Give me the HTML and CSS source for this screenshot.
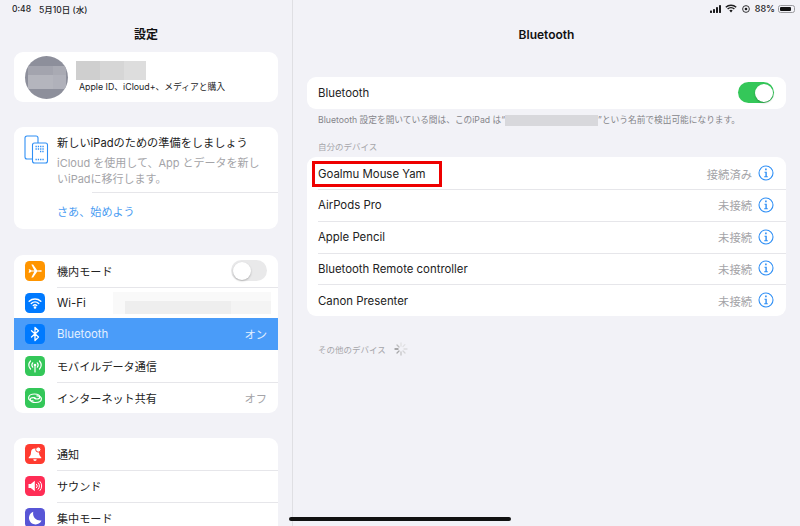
FILE: index.html
```html
<!DOCTYPE html>
<html lang="ja">
<head>
<meta charset="utf-8">
<title>Bluetooth</title>
<link rel="stylesheet" href="styles.css">
</head>
<body>
<div class="app">
  <aside class="sidebar">
    <div class="status status-left"><span>0:48</span><span>5月10日 (水)</span></div>
    <h1 class="title">設定</h1>
    <section class="card profile">
      <div class="avatar"><i></i><i></i><i></i><i></i></div>
      <div class="profile-text">
        <div class="name-blur"><i></i><i></i><i></i></div>
        <div class="profile-sub">Apple ID、iCloud+、メディアと購入</div>
      </div>
    </section>
    <section class="card promo">
      <div class="promo-body">
        <svg class="promo-icon" viewBox="0 0 25 29" fill="none" stroke="#2f8ff5" stroke-width="1.1">
          <path d="M8 24H3a2 2 0 0 1-2-2V3a2 2 0 0 1 2-2h9a2 2 0 0 1 2 2v5"/>
          <rect x="8.5" y="8" width="15" height="20" rx="2"/>
          <path d="M11.5 11.5h9M11.5 14h9M16 16.5h4.500M11.500 24.500h9" stroke-width="1.300" stroke-dasharray="1.300 1"/>
        </svg>
        <div class="promo-text">
          <div class="promo-title">新しいiPadのための準備をしましょう</div>
          <div class="promo-desc">iCloud を使用して、App とデータを新しいiPadに移行します。</div>
        </div>
      </div>
      <div class="promo-rule"></div>
      <a class="promo-link">さあ、始めよう</a>
    </section>
    <ul class="card list list-net">
      <li class="row">
        <span class="ico orange"><svg viewBox="0 0 20 20"><path fill="#fff" d="M3.500 8.600l1.300-.3 1.700 1.300 2.900-.1L6.300 3.500h1.800l4.200 5.900 2.900-.1c1 0 1.800.3 1.800.7s-.8.700-1.800.7l-2.900-.1-4.200 5.900H6.300l3.100-6-2.900-.1-1.700 1.300-1.300-.3.800-1.900z"/></svg></span>
        <span class="label label-ja">機内モード</span><span class="switch"></span>
      </li>
      <li class="row">
        <span class="ico blue"><svg viewBox="0 0 20 20" fill="none" stroke="#fff" stroke-width="1.500" stroke-linecap="round"><path d="M4.200 8.200a8.500 8.500 0 0 1 11.600 0M6.300 10.500a5.500 5.500 0 0 1 7.400 0M8.300 12.500a2.600 2.600 0 0 1 3.400 0"/><circle cx="10" cy="14.500" r=".6" fill="#fff"/></svg></span>
        <span class="label">Wi-Fi</span><span class="wifi-blur"><i></i><i></i></span>
      </li>
      <li class="row selected">
        <span class="ico blue"><svg viewBox="0 0 20 20" fill="none" stroke="#fff" stroke-width="1.300" stroke-linejoin="round" stroke-linecap="round"><path d="M6.500 6.700l7 6.400-3.500 3.400V3.500l3.500 3.200-7 6.400"/></svg></span>
        <span class="label">Bluetooth</span><span class="value">オン</span>
      </li>
      <li class="row">
        <span class="ico green"><svg viewBox="0 0 20 20" fill="none" stroke="#fff" stroke-width="1.200" stroke-linecap="round"><path d="M10 10.500V16"/><circle cx="10" cy="9" r="1.300" fill="#fff" stroke="none"/><path d="M7.700 6.800a3.500 3.500 0 0 0 0 4.400M12.300 6.800a3.500 3.500 0 0 1 0 4.400M5.500 5a6.200 6.200 0 0 0 0 8M14.500 5a6.200 6.200 0 0 1 0 8"/></svg></span>
        <span class="label label-ja">モバイルデータ通信</span>
      </li>
      <li class="row">
        <span class="ico green"><svg viewBox="0 0 20 20" fill="none" stroke="#fff" stroke-width="1.200"><path d="M8.500 12.800c-2.800.4-4.900-.8-4.900-2.800 0-2.400 2.700-4 5.900-4 3 0 5.300 1.300 5.300 3 0 1.200-1.300 2-2.900 2-1.400 0-2.500-.6-2.500-1.400"/><path d="M11.500 7.900c2.800-.4 4.900.8 4.900 2.800 0 2.400-2.700 3.800-5.900 3.800-3 0-5.300-1.200-5.300-2.900 0-1.200 1.300-2 2.900-2 1.400 0 2.500.6 2.500 1.400"/></svg></span>
        <span class="label label-ja">インターネット共有</span><span class="value">オフ</span>
      </li>
    </ul>
    <ul class="card list list-notify">
      <li class="row">
        <span class="ico red"><svg viewBox="0 0 20 20" fill="#fff"><path d="M10 4.500a4 4 0 0 0-4 4c0 3-1.600 4.200-2.300 5v.8h12.600v-.8c-.7-.8-2.300-2-2.300-5a4 4 0 0 0-4-4z"/><path d="M8.300 15.200h3.400a1.700 1.700 0 0 1-3.400 0z"/><circle cx="13.300" cy="5.500" r="2.600" stroke="#ff3b30" stroke-width="1"/></svg></span>
        <span class="label label-ja">通知</span>
      </li>
      <li class="row">
        <span class="ico pink"><svg viewBox="0 0 20 20" fill="none" stroke="#fff" stroke-width="1" stroke-linecap="round"><path fill="#fff" stroke="none" d="M3.500 8h2.300l4-3.200v10.400l-4-3.200H3.500z"/><path d="M11.500 8.200a2.500 2.500 0 0 1 0 3.600M13.200 6.800a4.500 4.500 0 0 1 0 6.400M15 5.500a6.500 6.500 0 0 1 0 9"/></svg></span>
        <span class="label label-ja">サウンド</span>
      </li>
      <li class="row">
        <span class="ico indigo"><svg viewBox="0 0 20 20"><path fill="#fff" d="M8.300 3.800a6.500 6.500 0 1 0 8.200 8.600c-4.800 1.200-9.500-3.300-8.200-8.600z"/></svg></span>
        <span class="label label-ja">集中モード</span>
      </li>
    </ul>
  </aside>

  <main class="detail">
    <div class="status status-right">
      <svg class="st-signal" viewBox="0 0 12 8" fill="#1c1c1e"><rect x="0" y="5.500" width="2" height="2.500" rx=".4"/><rect x="3" y="4" width="2" height="4" rx=".4"/><rect x="6" y="2" width="2" height="6" rx=".4"/><rect x="9" y="0" width="2" height="8" rx=".4"/></svg>
      <svg class="st-wifi" viewBox="0 0 12 9" fill="none" stroke="#1c1c1e" stroke-width="1.400"><path d="M.8 3.300a7.500 7.500 0 0 1 10.400 0M2.600 5.100a5 5 0 0 1 6.800 0"/><path fill="#1c1c1e" stroke="none" d="M4.300 6.600a2.500 2.500 0 0 1 3.400 0L6 8.500z"/></svg>
      <svg class="st-lock" viewBox="0 0 9 9" fill="none" stroke="#1c1c1e" stroke-width="1"><circle cx="4.500" cy="4.500" r="3.800"/><circle cx="4.500" cy="4.500" r="1.500" fill="#1c1c1e" stroke="none"/></svg>
      <span class="st-pct">88%</span>
      <span class="battery"><i></i></span>
    </div>
    <h1 class="title">Bluetooth</h1>
    <section class="card bt-card">
      <div class="row row-detail"><span class="label">Bluetooth</span><span class="switch on"></span></div>
    </section>
    <p class="note">Bluetooth 設定を開いている間は、このiPad は“<span class="note-blur"></span>”という名前で検出可能になります。</p>
    <h2 class="section">自分のデバイス</h2>
    <ul class="card list">
      <li class="row row-detail">
        <span class="label">Goalmu Mouse Yam</span><span class="highlight"></span>
        <span class="value">接続済み</span>
        <svg class="info" viewBox="0 0 16 16"><circle cx="8" cy="8" r="7" fill="none" stroke="#2f8ff5" stroke-width="1.100"/><path fill="#2f8ff5" d="M7.100 3.600h1.600v1.600H7.100zM6.500 6.700h2.300v4.500h1v1H6.200v-1h1.200V7.700h-.9z"/></svg>
      </li>
      <li class="row row-detail">
        <span class="label">AirPods Pro</span><span class="value">未接続</span>
        <svg class="info" viewBox="0 0 16 16"><circle cx="8" cy="8" r="7" fill="none" stroke="#2f8ff5" stroke-width="1.100"/><path fill="#2f8ff5" d="M7.100 3.600h1.600v1.600H7.100zM6.500 6.700h2.300v4.500h1v1H6.200v-1h1.200V7.700h-.9z"/></svg>
      </li>
      <li class="row row-detail">
        <span class="label">Apple Pencil</span><span class="value">未接続</span>
        <svg class="info" viewBox="0 0 16 16"><circle cx="8" cy="8" r="7" fill="none" stroke="#2f8ff5" stroke-width="1.100"/><path fill="#2f8ff5" d="M7.100 3.600h1.600v1.600H7.100zM6.500 6.700h2.300v4.500h1v1H6.200v-1h1.200V7.700h-.9z"/></svg>
      </li>
      <li class="row row-detail">
        <span class="label">Bluetooth Remote controller</span><span class="value">未接続</span>
        <svg class="info" viewBox="0 0 16 16"><circle cx="8" cy="8" r="7" fill="none" stroke="#2f8ff5" stroke-width="1.100"/><path fill="#2f8ff5" d="M7.100 3.600h1.600v1.600H7.100zM6.500 6.700h2.300v4.500h1v1H6.200v-1h1.200V7.700h-.9z"/></svg>
      </li>
      <li class="row row-detail">
        <span class="label">Canon Presenter</span><span class="value">未接続</span>
        <svg class="info" viewBox="0 0 16 16"><circle cx="8" cy="8" r="7" fill="none" stroke="#2f8ff5" stroke-width="1.100"/><path fill="#2f8ff5" d="M7.100 3.600h1.600v1.600H7.100zM6.500 6.700h2.300v4.500h1v1H6.200v-1h1.200V7.700h-.9z"/></svg>
      </li>
    </ul>
    <div class="others">
      <span>その他のデバイス</span>
      <svg class="spinner" viewBox="0 0 14 14" stroke-width="1.300" stroke-linecap="round" fill="none">
        <path stroke="#e0e0e2" d="M7 1v3"/><path stroke="#e0e0e2" d="M10.900 2.600L9 4.600"/><path stroke="#dcdcde" d="M13 7h-3"/><path stroke="#d4d4d6" d="M11 11L9 9"/><path stroke="#c4c4c6" d="M7 13v-3"/><path stroke="#a8a8aa" d="M3 11l2-2"/><path stroke="#8e8e90" d="M1 7h3"/><path stroke="#bcbcbe" d="M3 3l2 2"/>
      </svg>
    </div>
  </main>
</div>
<div class="home-bar"></div>
</body>
</html>
```
FILE: styles.css
```css
* { box-sizing: border-box; }
html, body { margin: 0; padding: 0; height: 526px; overflow: hidden; }
body {
  background: #f2f2f7;
  color: #1c1c1e;
  font-family: "Inter", "Noto Sans CJK JP", sans-serif;
  font-size: 12px;
  position: relative;
}
ul { list-style: none; margin: 0; padding: 0; }
h1, h2, p { margin: 0; font-weight: normal; }

.app { display: flex; height: 526px; overflow: hidden; }
.sidebar {
  width: 293px;
  flex: none;
  padding: 0 14px;
  border-right: 1px solid #dfdfe3;
}
.detail { flex: 1; min-width: 0; padding: 0 14px; }

.status { height: 17px; display: flex; align-items: center; font-size: 8.500px; font-weight: 500; }
.status-left { gap: 8px; margin-left: -2px; }
.status-right { justify-content: flex-end; gap: 3px; margin-right: -12px; }
.st-signal { width: 12px; height: 8px; }
.st-wifi { width: 12px; height: 9px; }
.st-lock { width: 8px; height: 8px; margin: 0 2px; }
.st-pct { font-size: 9px; }
.battery {
  width: 17px; height: 8px; border-radius: 2.500px; border: 1px solid #9a9a9e;
  padding: 1px; display: flex; margin-right: 3px;
}
.battery i { display: block; width: 88%; background: #111; border-radius: 1px; }

.title { font-size: 12px; font-weight: 600; text-align: center; line-height: 16px; margin-top: 10px; color: #111; }

.card { background: #fff; border-radius: 9px; overflow: hidden; }

.profile { margin-top: 9px; height: 50px; display: flex; align-items: center; padding-left: 11px; }
.avatar {
  width: 43px; height: 43px; border-radius: 50%; background: #8d8f9b;
  display: grid; grid-template-columns: 25px 13px; grid-template-rows: 9px 14px;
  align-content: center; justify-content: center; flex: none; overflow: hidden;
}
.avatar i:nth-child(1) { background: #a3a4ae; }
.avatar i:nth-child(2) { background: #a9aab3; }
.avatar i:nth-child(3) { background: #b4b5bd; }
.avatar i:nth-child(4) { background: #b0b1ba; }
.profile-text { margin-left: 8px; }
.name-blur { display: flex; width: 70px; height: 19px; }
.name-blur i { display: block; flex: 1; }
.name-blur i:nth-child(1) { background: #cfcfcf; }
.name-blur i:nth-child(2) { background: #d6d6d6; }
.name-blur i:nth-child(3) { background: #dddddd; flex: .9; }
.profile-sub { font-size: 8.800px; line-height: 12px; margin: 1px 0 0 3px; white-space: nowrap; }

.promo { margin-top: 25px; height: 102px; }
.promo-body { display: flex; padding: 8px 0 0 10px; height: 65px; }
.promo-icon { width: 25px; height: 29px; flex: none; }
.promo-text { margin-left: 8px; width: 206px; padding-top: 1px; }
.promo-title { font-size: 11.200px; line-height: 15px; color: #222; white-space: nowrap; }
.promo-desc { font-size: 11px; line-height: 16px; color: #a4a4a8; margin-top: 4px; }
.promo-rule { height: 1px; background: #e6e6ea; margin-left: 78px; }
.promo-link { display: block; color: #4a9cf2; font-size: 11.100px; line-height: 16px; margin: 11px 0 0 43px; }

.list-net { margin-top: 26px; }
.list-notify { margin-top: 25px; }

.row { height: 31.800px; display: flex; align-items: center; padding: 0 11px; position: relative; }
.sidebar .row { height: 31.700px; }
.row + .row::before {
  content: ""; position: absolute; top: 0; left: 43px; right: 0; height: 1px; background: #e6e6ea;
}
.ico {
  width: 20px; height: 20px; border-radius: 4.500px; flex: none; display: block; margin-right: 12px;
}
.ico svg { width: 20px; height: 20px; display: block; }
.orange { background: #ff9500; }
.blue { background: #007aff; }
.green { background: #34c759; }
.red { background: #ff3b30; }
.pink { background: #ff2d55; }
.indigo { background: #5856d6; }
.label { flex: 1; white-space: nowrap; font-size: 11.400px; color: #222; }
.label-ja { font-size: 11.100px; }
.value { color: #a4a4a8; font-size: 11.300px; white-space: nowrap; }
.row-detail .label, .row-detail .value { padding-top: 1px; }
.selected { background: #4a9cf9; }
.selected .label, .selected .value { color: #e4f0ff; }
.selected::before, .selected + .row::before { display: none; }

.switch {
  width: 36px; height: 21px; border-radius: 11px; background: #e9e9ea; position: relative; flex: none;
}
.switch::after {
  content: ""; position: absolute; top: 1.500px; left: 1.500px; width: 18px; height: 18px;
  background: #fff; border-radius: 50%; box-shadow: 0 1px 2px rgba(0,0,0,.25);
}
.switch.on { background: #34c759; }
.switch.on::after { left: auto; right: 1.500px; }

.wifi-blur {
  position: absolute; right: 7px; top: 5px; width: 158px; height: 22px;
  display: flex; flex-direction: column;
}
.wifi-blur i { display: block; }
.wifi-blur i:first-child { height: 9px; background: #f9f9f9; }
.wifi-blur i:last-child { height: 13px; background: linear-gradient(to right, #f9f9f9 0 12px, #eeeeee 12px 75%, #f4f4f4 75%); }

.bt-card { margin-top: 34px; }
.row-detail { padding: 0 12px 0 11px; }
.row-detail + .row-detail::before { left: 11px; }
.note { font-size: 8.700px; line-height: 12px; margin: 5px 0 0 11px; color: #85858a; white-space: nowrap; }
.note-blur { display: inline-block; width: 93px; height: 11px; background: #d8d8dc; vertical-align: middle; }
.section { font-size: 8.500px; line-height: 12px; margin: 15px 0 4.200px 11px; color: #a6a6aa; }
.highlight {
  position: absolute; left: 5px; top: 4px; width: 130px; height: 26px; border: 3px solid #ee0000;
}
.info { width: 16px; height: 16px; margin-left: 6px; flex: none; }
.others {
  display: flex; align-items: center; gap: 8px; margin: 26px 0 0 11px; height: 14px;
  font-size: 8.500px; color: #a6a6aa;
}
.spinner { width: 14px; height: 14px; }
.home-bar {
  position: absolute; left: 289px; top: 517px; width: 222px; height: 4px; background: #111; border-radius: 2px;
}
```
